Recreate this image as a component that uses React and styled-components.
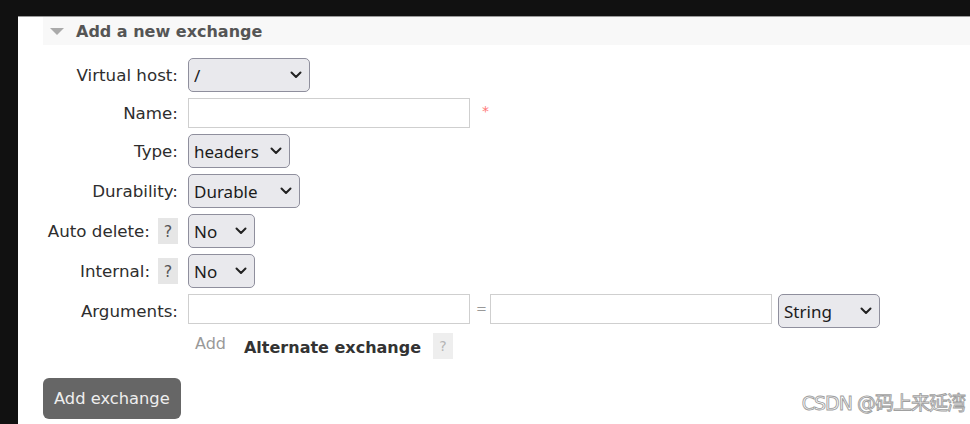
import React from 'react'
import styled, { createGlobalStyle } from 'styled-components'

const Global = createGlobalStyle`
  html, body {
    margin: 0;
    height: 100%;
    background: #111;
    overflow: hidden;
  }
  #root {
    height: 100%;
  }
`

const Page = styled.div`
  height: 100%;
  padding: 16px 0 0 18px;
  box-sizing: border-box;
`

const Panel = styled.div`
  position: relative;
  height: 100%;
  background: #fff;
  border-top: 1px solid #9a9a9a;
  padding-left: 25px;
  box-sizing: border-box;
  font-family: 'DejaVu Sans', Verdana, sans-serif;
  font-size: 16px;
  color: #333;
`

const Heading = styled.h2`
  display: flex;
  align-items: center;
  gap: 12px;
  height: 28px;
  margin: 0;
  padding-left: 7px;
  background: #f8f8f8;
  font-size: 16px;
  font-weight: bold;
  color: #555;
`

const Triangle = styled.span`
  width: 0;
  height: 0;
  border-left: 7px solid transparent;
  border-right: 7px solid transparent;
  border-top: 7px solid #aaa;
`

const Form = styled.div`
  display: grid;
  grid-template-columns: 135px auto;
  column-gap: 10px;
  row-gap: 6px;
  align-items: center;
  margin-top: 13px;
`

const Label = styled.label`
  display: flex;
  justify-content: flex-end;
  align-items: center;
  gap: 8px;
  white-space: nowrap;
  font-size: 16.7px;
  color: #2e2e2e;
`

const Help = styled.span`
  display: inline-flex;
  align-items: center;
  justify-content: center;
  width: 20px;
  height: 26px;
  background: ${(p) => (p.$light ? '#eee' : '#e6e6e6')};
  color: ${(p) => (p.$light ? '#b5b5b5' : '#555')};
  font-size: ${(p) => (p.$light ? '14px' : '16px')};
`

const Field = styled.div`
  display: flex;
  align-items: ${(p) => (p.$top ? 'flex-start' : 'center')};
  gap: 6px;
`

const Input = styled.input`
  width: ${(p) => p.$w}px;
  height: 30px;
  box-sizing: border-box;
  border: 1px solid #cfcfcf;
  margin: 0;
  padding: 0 4px;
  font: 16px 'DejaVu Sans', sans-serif;
  background: #fff;
`

const Required = styled.span`
  color: #f77;
  font-size: 14px;
  margin-left: 6px;
  margin-bottom: 4px;
`

const Equals = styled.span`
  width: 8px;
  line-height: 30px;
  text-align: center;
  color: #999;
  font-size: 13px;
`

const SelectWrap = styled.div`
  position: relative;
  width: ${(p) => p.$w}px;
  height: 34px;
`

const SelectBox = styled.select`
  appearance: none;
  width: 100%;
  height: 100%;
  box-sizing: border-box;
  margin: 0;
  border: 1px solid #8f8f9d;
  border-radius: 5px;
  background: #e9e9ed;
  padding: 0 24px 0 5px;
  font: 17px 'Noto Sans', 'Open Sans', sans-serif;
  color: #1b1b1b;
`

const Chevron = styled.svg`
  position: absolute;
  right: 8px;
  top: 50%;
  margin-top: -4px;
  pointer-events: none;
`

const Select = ({ width, value, options }) => (
  <SelectWrap $w={width}>
    <SelectBox defaultValue={value}>
      {options.map((o) => (
        <option key={o}>{o}</option>
      ))}
    </SelectBox>
    <Chevron width='12' height='8' viewBox='0 0 12 8'>
      <path d='M1.5 1.5 L6 6 L10.5 1.5' fill='none' stroke='#222' strokeWidth='2' strokeLinecap='round' strokeLinejoin='round' />
    </Chevron>
  </SelectWrap>
)

const ExtraRow = styled.div`
  display: flex;
  align-items: center;
  height: 24px;
  padding-left: 7px;
`

const AddLink = styled.span`
  color: #999;
  margin-right: 18px;
  margin-bottom: 6px;
`

const SubTitle = styled.span`
  font-weight: bold;
  color: #333;
  margin-right: 12px;
  margin-top: 3px;
`

const Button = styled.button`
  margin-top: 20px;
  height: 41px;
  padding: 0 11px;
  border: none;
  border-radius: 6px;
  background: #666;
  color: #eee;
  font: 16.3px 'DejaVu Sans', Verdana, sans-serif;
`

const Watermark = styled.div`
  position: absolute;
  right: 5px;
  bottom: 9px;
  font: 19px 'DejaVu Sans', 'Noto Sans CJK SC', sans-serif;
  color: #fff;
  -webkit-text-stroke: 0.9px #a0a0a0;
  letter-spacing: -1px;
`

export default function App () {
  return (
    <Page>
      <Global />
      <Panel>
        <Heading>
          <Triangle />
          Add a new exchange
        </Heading>
        <Form>
          <Label>Virtual host:</Label>
          <Select width={122} value='/' options={['/']} />

          <Label>Name:</Label>
          <Field>
            <Input $w={282} />
            <Required>*</Required>
          </Field>

          <Label>Type:</Label>
          <Select width={102} value='headers' options={['direct', 'fanout', 'headers', 'topic']} />

          <Label>Durability:</Label>
          <Select width={112} value='Durable' options={['Durable', 'Transient']} />

          <Label>Auto delete: <Help>?</Help></Label>
          <Select width={67} value='No' options={['No', 'Yes']} />

          <Label>Internal: <Help>?</Help></Label>
          <Select width={67} value='No' options={['No', 'Yes']} />

          <Label>Arguments:</Label>
          <Field $top>
            <Input $w={282} />
            <Equals>=</Equals>
            <Input $w={282} />
            <Select width={102} value='String' options={['String', 'Number', 'Boolean', 'List']} />
          </Field>

          <span />
          <ExtraRow>
            <AddLink>Add</AddLink>
            <SubTitle>Alternate exchange</SubTitle>
            <Help $light>?</Help>
          </ExtraRow>
        </Form>
        <Button>Add exchange</Button>
        <Watermark>CSDN @码上来延湾</Watermark>
      </Panel>
    </Page>
  )
}
